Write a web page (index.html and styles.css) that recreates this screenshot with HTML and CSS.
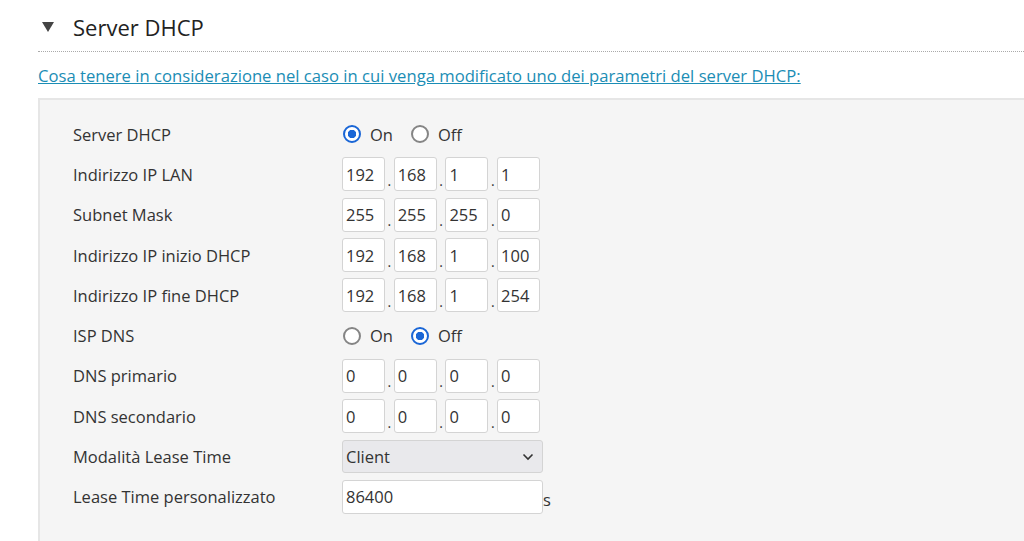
FILE: index.html
```html
<!DOCTYPE html>
<html lang="it">
<head>
<meta charset="utf-8">
<title>Server DHCP</title>
<link rel="stylesheet" href="styles.css">
</head>
<body>
<div class="page">
  <div class="section-head">
    <span class="tri"></span>
    <h2 class="title">Server DHCP</h2>
  </div>
  <a class="note" href="#">Cosa tenere in considerazione nel caso in cui venga modificato uno dei parametri del server DHCP:</a>
  <div class="panel">
    <div class="row">
      <div class="label">Server DHCP</div>
      <div class="ctrl radios">
        <label class="radio"><span class="dot on"></span>On</label>
        <label class="radio"><span class="dot"></span>Off</label>
      </div>
    </div>
    <div class="row">
      <div class="label">Indirizzo IP LAN</div>
      <div class="ctrl ip"><span class="box">192</span><i>.</i><span class="box">168</span><i>.</i><span class="box">1</span><i>.</i><span class="box">1</span></div>
    </div>
    <div class="row">
      <div class="label">Subnet Mask</div>
      <div class="ctrl ip"><span class="box">255</span><i>.</i><span class="box">255</span><i>.</i><span class="box">255</span><i>.</i><span class="box">0</span></div>
    </div>
    <div class="row">
      <div class="label">Indirizzo IP inizio DHCP</div>
      <div class="ctrl ip"><span class="box">192</span><i>.</i><span class="box">168</span><i>.</i><span class="box">1</span><i>.</i><span class="box">100</span></div>
    </div>
    <div class="row">
      <div class="label">Indirizzo IP fine DHCP</div>
      <div class="ctrl ip"><span class="box">192</span><i>.</i><span class="box">168</span><i>.</i><span class="box">1</span><i>.</i><span class="box">254</span></div>
    </div>
    <div class="row">
      <div class="label">ISP DNS</div>
      <div class="ctrl radios">
        <label class="radio"><span class="dot"></span>On</label>
        <label class="radio"><span class="dot on"></span>Off</label>
      </div>
    </div>
    <div class="row">
      <div class="label">DNS primario</div>
      <div class="ctrl ip"><span class="box">0</span><i>.</i><span class="box">0</span><i>.</i><span class="box">0</span><i>.</i><span class="box">0</span></div>
    </div>
    <div class="row">
      <div class="label">DNS secondario</div>
      <div class="ctrl ip"><span class="box">0</span><i>.</i><span class="box">0</span><i>.</i><span class="box">0</span><i>.</i><span class="box">0</span></div>
    </div>
    <div class="row">
      <div class="label">Modalità Lease Time</div>
      <div class="ctrl">
        <div class="select">Client
          <svg class="chev" width="12" height="8" viewBox="0 0 12 8"><path d="M1.5 1.5 L6 6 L10.5 1.5" fill="none" stroke="#333" stroke-width="1.6"/></svg>
        </div>
      </div>
    </div>
    <div class="row">
      <div class="label">Lease Time personalizzato</div>
      <div class="ctrl"><span class="text">86400</span><span class="unit">s</span></div>
    </div>
  </div>
</div>
</body>
</html>
```
FILE: styles.css
```css
html, body { margin: 0; padding: 0; background: #fff; }
body {
  font-family: "Open Sans", "Noto Sans", sans-serif;
  color: #333;
  font-size: 16.5px;
}
.page { padding-left: 38px; }
.section-head {
  display: flex;
  align-items: center;
  height: 52px;
  border-bottom: 1px dotted #aaa;
  box-sizing: border-box;
  padding-top: 2px;
}
.tri {
  width: 0; height: 0;
  border-left: 6px solid transparent;
  border-right: 6px solid transparent;
  border-top: 10px solid #444;
  margin-left: 4px;
  margin-right: 19px;
}
.title {
  margin: 0;
  font-weight: normal;
  font-size: 22px;
  color: #222;
}
.note {
  display: inline-block;
  margin-top: 13px;
  color: #1b8db5;
  text-decoration: underline;
  line-height: 22px;
  font-size: 16.65px;
}
.panel {
  margin-top: 11px;
  background: #f5f5f5;
  border-top: 2px solid #e6e6e6;
  border-left: 2px solid #e6e6e6;
  padding: 14px 0 0 33px;
  min-height: 440px;
}
.row {
  display: flex;
  align-items: center;
  height: 40.3px;
}
.label { width: 269px; }
.ctrl { display: flex; align-items: center; }
.radio { display: flex; align-items: center; margin-right: 17px; }
.dot {
  width: 14px; height: 14px;
  border: 2px solid #858585;
  border-radius: 50%;
  margin: 0 9px 0 1px;
  box-sizing: content-box;
  background: #fff;
}
.dot.on {
  border-color: #1a66d6;
  background: radial-gradient(circle, #1a66d6 0 4px, #fff 4.5px);
}
.ip i { font-style: normal; width: 8.7px; text-align: center; padding-top: 12px; font-size: 14px; }
.box, .text {
  height: 34px;
  box-sizing: border-box;
  border: 1px solid #d4d4d4;
  border-radius: 3px;
  background: #fff;
  display: flex;
  align-items: center;
  padding-left: 3px;
}
.box { width: 43px; }
.select {
  width: 201px; height: 33px;
  box-sizing: border-box;
  border: 1px solid #d4d4d4;
  border-radius: 3px;
  background: #e9e9ec;
  display: flex; align-items: center;
  padding: 0 8px 0 3px;
  justify-content: space-between;
}
.text { width: 201px; }
.unit { padding-top: 6px; }
```
